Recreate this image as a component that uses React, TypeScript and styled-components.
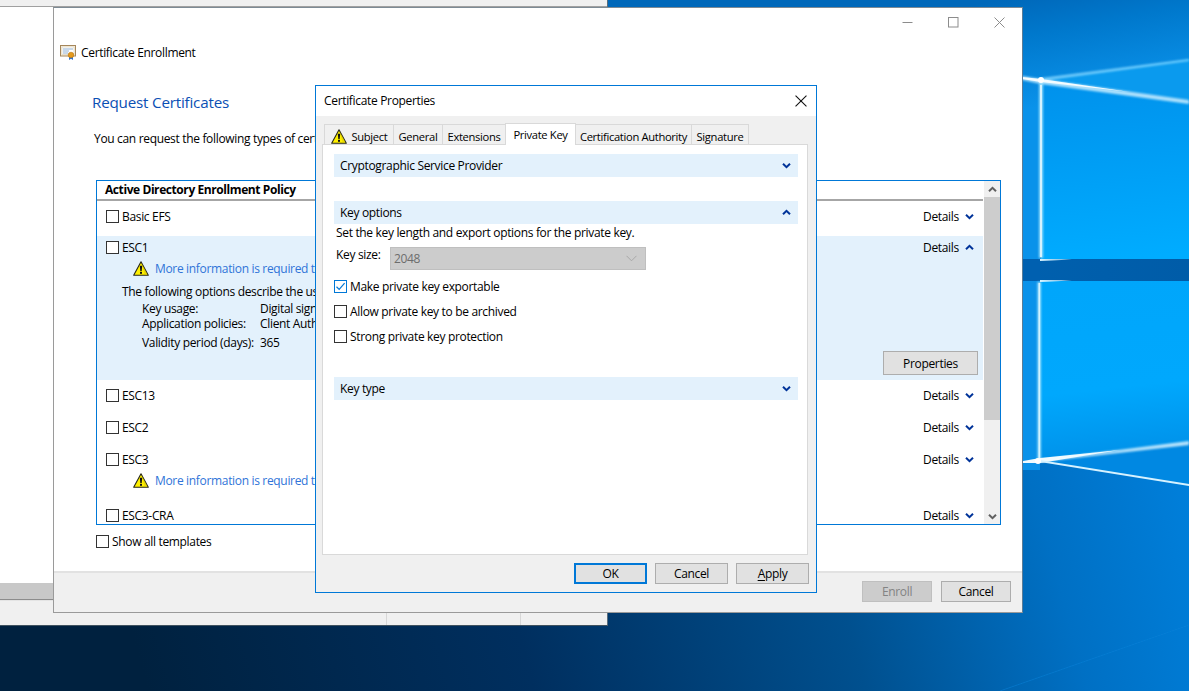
import styled, { createGlobalStyle } from "styled-components";

const GlobalStyle = createGlobalStyle`
  html, body {
    margin: 0;
    padding: 0;
    height: 100%;
    overflow: hidden;
  }
  body {
    font-family: "Open Sans", "Liberation Sans", sans-serif;
    font-size: 12px;
    letter-spacing: -0.33px;
    color: #000;
  }
`;

const Desktop = styled.div`
  position: relative;
  width: 1189px;
  height: 691px;
  overflow: hidden;
  background: #003a70;
`;

const Wallpaper = styled.svg`
  position: absolute;
  inset: 0;
`;

// windows on the desktop
const BackWindow = styled.div`
  position: absolute;
  left: 0;
  top: 0;
  width: 608px;
  height: 626px;
  box-sizing: border-box;
  display: flex;
  flex-direction: column;
  background: #fff;
  border-bottom: 1px solid #40525f;
  border-right: 1px solid #5a6d7c;
`;

const BackTop = styled.div`
  height: 6px;
  background: #f0f0f0;
  border-bottom: 1px solid #a0a0a0;
`;

const BackContent = styled.div`
  flex: 1;
`;

const BackScroll = styled.div`
  height: 16px;
  background: #c8c8c8;
  border-bottom: 1px solid #8c8c8c;
`;

const BackStatus = styled.div`
  height: 24px;
  display: flex;
  background: #f0f0f0;
  border-top: 1px solid #e4e4e4;
`;

const StatusCell = styled.div<{ $w: number }>`
  width: ${(p) => p.$w}px;
  border-right: 1px solid #d7d7d7;
`;

const WizardWindow = styled.div`
  position: absolute;
  left: 53px;
  top: 7px;
  width: 970px;
  height: 606px;
  box-sizing: border-box;
  display: flex;
  flex-direction: column;
  background: #fff;
  border: 1px solid #9a9a9a;
  border-top-color: #7d8a94;
  border-right-color: #5c7c96;
`;

const Controls = styled.div`
  height: 29px;
  display: flex;
  align-items: center;
  justify-content: flex-end;
  gap: 35px;
  padding-right: 17px;
`;

const TitleRow = styled.div`
  display: flex;
  align-items: center;
  gap: 5px;
  height: 20px;
  margin: 5px 0 0 6px;
`;

const Heading = styled.div`
  margin: 29px 0 0 38px;
  height: 22px;
  line-height: 22px;
  font-size: 15.2px;
  letter-spacing: -0.2px;
  color: #0a4fb4;
`;

const Intro = styled.div`
  margin: 17px 0 0 40px;
  height: 18px;
  line-height: 18px;
  white-space: nowrap;
`;

const ListBox = styled.div`
  margin: 32px 0 0 42px;
  width: 905px;
  height: 345px;
  box-sizing: border-box;
  border: 1px solid #0078d7;
  display: flex;
  overflow: hidden;
`;

const ListBody = styled.div`
  flex: 1;
  min-width: 0;
  overflow: hidden;
`;

const ListHeader = styled.div`
  height: 18px;
  line-height: 18px;
  padding-left: 8px;
  font-weight: 700;
  letter-spacing: -0.42px;
  border-bottom: 2px solid #a6a6a6;
`;

const Row = styled.div<{ $open?: boolean; $h: number; $top: number }>`
  height: ${(p) => p.$h}px;
  box-sizing: border-box;
  padding: ${(p) => p.$top}px 0 0 9px;
  background: ${(p) => (p.$open ? "#e3f1fc" : "transparent")};
`;

const RowHead = styled.div`
  display: flex;
  align-items: center;
  height: 16px;
`;

const RowName = styled.span`
  margin-left: 3px;
  flex: 1;
`;

const DetailsToggle = styled.span`
  display: flex;
  align-items: center;
  gap: 6px;
  width: 60px;
`;

const WarnLine = styled.div`
  display: flex;
  align-items: center;
  gap: 6px;
  height: 16px;
  margin: 5px 0 0 27px;
  white-space: nowrap;
  color: #2f74d8;
`;

const OptionsBlock = styled.div`
  margin: 7px 0 0 16px;
  white-space: nowrap;
`;

const OptionLine = styled.div<{ $gap?: number }>`
  display: flex;
  height: 16px;
  line-height: 16px;
  margin: ${(p) => p.$gap ?? 0}px 0 0 20px;
`;

const OptionLabel = styled.span`
  width: 118px;
`;

const RowFoot = styled.div`
  display: flex;
  justify-content: flex-end;
  margin: 0 5px 0 0;
`;

const Scrollbar = styled.div`
  width: 16px;
  margin-left: 1px;
  display: flex;
  flex-direction: column;
  background: #f0f0f0;
`;

const ScrollArrow = styled.div`
  height: 16px;
  display: flex;
  align-items: center;
  justify-content: center;
`;

const ScrollThumb = styled.div`
  height: 223px;
  background: #cdcdcd;
`;

const ScrollTrack = styled.div`
  flex: 1;
`;

const ShowAll = styled.label`
  display: flex;
  align-items: center;
  gap: 3px;
  height: 16px;
  margin: 8px 0 0 42px;
`;

const Footer = styled.div`
  margin-top: auto;
  height: 41px;
  box-sizing: border-box;
  display: flex;
  justify-content: flex-end;
  gap: 9px;
  padding: 8px 11px 0 0;
  background: #f0f0f0;
  border-top: 2px solid #e2e2e2;
`;

const Button = styled.button<{ $w: number; $h?: number; $default?: boolean }>`
  width: ${(p) => p.$w}px;
  height: ${(p) => p.$h ?? 21}px;
  padding: 0;
  box-sizing: border-box;
  font: inherit;
  letter-spacing: inherit;
  color: #000;
  background: #e1e1e1;
  border: ${(p) => (p.$default ? "2px solid #0078d7" : "1px solid #adadad")};
  &:disabled {
    background: #cccccc;
    border-color: #bfbfbf;
    color: #838383;
  }
`;

const DialogWindow = styled.div`
  position: absolute;
  left: 315px;
  top: 85px;
  width: 502px;
  height: 508px;
  box-sizing: border-box;
  display: flex;
  flex-direction: column;
  background: #f0f0f0;
  border: 1px solid #0078d7;
`;

const DialogTitle = styled.div`
  height: 30px;
  box-sizing: border-box;
  display: flex;
  align-items: center;
  justify-content: space-between;
  padding: 0 9px 1px 8px;
  background: #fff;
`;

const TabStrip = styled.div`
  display: flex;
  align-items: flex-end;
  height: 28px;
  padding-left: 9px;
`;

const Tab = styled.div<{ $w: number; $active?: boolean }>`
  width: ${(p) => p.$w}px;
  height: ${(p) => (p.$active ? 22 : 20)}px;
  box-sizing: border-box;
  display: flex;
  align-items: center;
  justify-content: center;
  gap: 5px;
  position: relative;
  white-space: nowrap;
  font-size: 11.2px;
  background: ${(p) => (p.$active ? "#fff" : "#f0f0f0")};
  border: 1px solid #d9d9d9;
  border-bottom: none;
  margin-left: -1px;
  ${(p) => (p.$active ? "z-index: 1; margin-bottom: -1px;" : "padding-top: 3px;")}
`;

const TabPanel = styled.div`
  margin-left: 6px;
  width: 486px;
  height: 411px;
  box-sizing: border-box;
  background: #fff;
  border: 1px solid #d9d9d9;
  padding: 9px 9px 0 11px;
`;

const SectionBar = styled.div<{ $gap?: number }>`
  height: 23px;
  margin-top: ${(p) => p.$gap ?? 0}px;
  display: flex;
  align-items: center;
  justify-content: space-between;
  padding: 0 7px 0 6px;
  background: #e3f1fc;
`;

const HelpLine = styled.div`
  height: 16px;
  line-height: 16px;
  margin: 1px 0 0 2px;
`;

const KeySizeRow = styled.div`
  display: flex;
  margin: 6px 0 0 2px;
`;

const KeySizeLabel = styled.span`
  width: 54px;
  line-height: 16px;
`;

const KeySizeSelect = styled.div`
  width: 256px;
  height: 23px;
  box-sizing: border-box;
  display: flex;
  align-items: center;
  justify-content: space-between;
  padding: 0 8px 0 3px;
  background: #cccccc;
  border: 1px solid #bfbfbf;
  color: #6d6d6d;
`;

const CheckList = styled.div`
  margin-top: 8px;
  display: flex;
  flex-direction: column;
  gap: 9px;
`;

const CheckRow = styled.label`
  display: flex;
  align-items: center;
  gap: 3px;
  height: 16px;
`;

const Box = styled.span<{ $checked?: boolean }>`
  width: 13px;
  height: 13px;
  flex: none;
  box-sizing: border-box;
  display: inline-flex;
  align-items: center;
  justify-content: center;
  background: #fff;
  border: 1px solid ${(p) => (p.$checked ? "#0078d7" : "#333")};
`;

const DialogButtons = styled.div`
  display: flex;
  justify-content: flex-end;
  gap: 8px;
  padding: 8px 7px 0 0;
`;

const Underlined = styled.span`
  text-decoration: underline;
  text-underline-offset: 2px;
`;

const Chevron = ({ up, color = "#003399" }: { up?: boolean; color?: string }) => (
  <svg width="9" height="7" viewBox="0 0 9 7">
    <path
      d={up ? "M1 5.2 L4.5 1.8 L8 5.2" : "M1 1.8 L4.5 5.2 L8 1.8"}
      fill="none"
      stroke={color}
      strokeWidth="2"
    />
  </svg>
);

const WarningIcon = () => (
  <svg width="16" height="15" viewBox="0 0 16 15">
    <path d="M8 0.8 L15.3 14.2 L0.7 14.2 Z" fill="#fff000" stroke="#26261a" strokeWidth="1.1" strokeLinejoin="round" />
    <path d="M8.8 2.5 L14.6 13.6 L11.5 13.6 Z" fill="#d8c800" opacity="0.55" />
    <path d="M6.8 4.8 H9.2 L8.7 10 H7.3 Z" fill="#111" />
    <rect x="7" y="10.8" width="2" height="2" fill="#111" />
  </svg>
);

const CertIcon = () => (
  <svg width="16" height="15" viewBox="0 0 16 15">
    <rect x="0.5" y="0.5" width="15" height="10.5" fill="#f6efe0" stroke="#a5865a" />
    <rect x="2" y="2" width="12" height="7.5" fill="#fff" stroke="#d8cdb6" strokeWidth="0.6" />
    <path d="M3 4 H13 M3 6 H9 M3 8 H8" stroke="#8fb0d4" strokeWidth="1" />
    <path d="M9 11 L9 15 L11 13.8 L13 15 L13 11 Z" fill="#2a6fd0" />
    <circle cx="11" cy="10" r="2.8" fill="#e59a1c" stroke="#b8760f" strokeWidth="0.6" />
  </svg>
);

const CheckMark = () => (
  <svg width="11" height="11" viewBox="0 0 11 11">
    <path d="M1.5 5.8 L4.2 8.4 L9.6 2.2" fill="none" stroke="#0078d7" strokeWidth="1.2" />
  </svg>
);

const MinIcon = () => (
  <svg width="11" height="11" viewBox="0 0 11 11">
    <path d="M0.5 5.5 H10.5" stroke="#8c8c8c" strokeWidth="1" />
  </svg>
);

const MaxIcon = () => (
  <svg width="11" height="11" viewBox="0 0 11 11">
    <rect x="0.5" y="0.5" width="9.5" height="9.5" fill="none" stroke="#8c8c8c" strokeWidth="1" />
  </svg>
);

const CloseIcon = ({ color = "#8c8c8c", size = 11 }: { color?: string; size?: number }) => (
  <svg width={size} height={size} viewBox="0 0 11 11">
    <path d="M0.5 0.5 L10.5 10.5 M10.5 0.5 L0.5 10.5" stroke={color} strokeWidth="1" />
  </svg>
);

const WallpaperArt = () => (
  <Wallpaper width="1189" height="691" viewBox="0 0 1189 691">
    <defs>
      <linearGradient id="floor" gradientUnits="userSpaceOnUse" x1="150" y1="700" x2="1180" y2="420">
        <stop offset="0" stopColor="#00213f" />
        <stop offset="0.35" stopColor="#002f5f" />
        <stop offset="0.65" stopColor="#00508f" />
        <stop offset="0.85" stopColor="#0070c4" />
        <stop offset="1" stopColor="#0080dc" />
      </linearGradient>
      <linearGradient id="sky" gradientUnits="userSpaceOnUse" x1="1000" y1="0" x2="1020" y2="110">
        <stop offset="0" stopColor="#0068ba" />
        <stop offset="0.35" stopColor="#0078cc" />
        <stop offset="1" stopColor="#0a92ea" />
      </linearGradient>
      <linearGradient id="paneTop" gradientUnits="userSpaceOnUse" x1="1100" y1="80" x2="1120" y2="260">
        <stop offset="0" stopColor="#0092ec" />
        <stop offset="1" stopColor="#00acff" />
      </linearGradient>
      <linearGradient id="paneBottom" gradientUnits="userSpaceOnUse" x1="1100" y1="280" x2="1120" y2="460">
        <stop offset="0" stopColor="#00a6fb" />
        <stop offset="0.6" stopColor="#00a8fd" />
        <stop offset="1" stopColor="#0090e8" />
      </linearGradient>
      <linearGradient id="band" gradientUnits="userSpaceOnUse" x1="1022" y1="0" x2="1189" y2="0">
        <stop offset="0" stopColor="#0060ae" />
        <stop offset="1" stopColor="#005ca8" />
      </linearGradient>
      <filter id="glow" x="-20%" y="-20%" width="140%" height="140%">
        <feGaussianBlur stdDeviation="1.2" />
      </filter>
      <filter id="soft" x="-20%" y="-20%" width="140%" height="140%">
        <feGaussianBlur stdDeviation="0.5" />
      </filter>
    </defs>
    <rect width="1189" height="691" fill="url(#floor)" />
    <polygon points="600,0 1189,0 1189,120 1040,90 1040,470 600,470" fill="url(#sky)" />
    <polygon points="1041,80 1189,59 1189,100" fill="#0a9aee" />
    <polygon points="1041,82 1189,103 1189,259 1041,259" fill="url(#paneTop)" />
    <rect x="1022" y="259" width="167" height="22" fill="url(#band)" />
    <polygon points="1040,281 1189,281 1189,443 1040,461" fill="url(#paneBottom)" />
    <polygon points="1040,461 1189,443 1189,486" fill="#0088e2" />
    <rect x="1022" y="259" width="18" height="21" fill="#0060b0" />
    {/* light streaks */}
    <g filter="url(#glow)" opacity="0.9">
      <polygon points="1022,76 1041,79 1189,100 1189,104 1041,84 1022,80" fill="#bfeaff" />
      <polygon points="1041,78 1189,59 1189,61 1041,81" fill="#7fd4ff" />
      <rect x="1039" y="82" width="4" height="176" fill="#a8e6ff" />
      <rect x="1037.5" y="282" width="3.5" height="178" fill="#a8e6ff" />
      <polygon points="1040,460 1189,441 1189,445 1040,462" fill="#cdeeff" />
    </g>
    <g filter="url(#soft)">
      <rect x="1040" y="85" width="2" height="172" fill="#d4f2ff" />
      <rect x="1038.5" y="283" width="1.6" height="175" fill="#d4f2ff" />
      <polygon points="1022,77 1041,79 1130,92 1041,82 1022,79" fill="#f4fcff" />
      <polygon points="1040,259 1072,259.5 1040,261" fill="#d8f4ff" />
      <polygon points="1040,280 1072,280.5 1040,282" fill="#d8f4ff" />
      <polygon points="1023,461 1040,458 1120,450 1040,463 1023,463" fill="#f0fbff" />
      <polygon points="1040,460 1189,484 1189,486 1040,462" fill="#d6f2ff" />
      <circle cx="1041" cy="80" r="3" fill="#fff" />
      <circle cx="1038" cy="461" r="3" fill="#fff" />
    </g>
    <path d="M1000,691 L1189,625" stroke="#0a82d8" strokeWidth="1" opacity="0.5" filter="url(#soft)" />
  </Wallpaper>
);

type CertRow = { name: string; warn?: boolean; top: number; h: number };

const MORE_INFO = "More information is required to enroll for this certificate. Click here to configure settings.";

const plainRows: CertRow[] = [
  { name: "ESC13", top: 7, h: 32 },
  { name: "ESC2", top: 7, h: 32 },
  { name: "ESC3", warn: true, top: 7, h: 56 },
  { name: "ESC3-CRA", top: 7, h: 32 },
];

const RowHeader = ({ name, up }: { name: string; up?: boolean }) => (
  <RowHead>
    <Box />
    <RowName>{name}</RowName>
    <DetailsToggle>
      Details <Chevron up={up} />
    </DetailsToggle>
  </RowHead>
);

export default function App() {
  return (
    <Desktop>
      <GlobalStyle />
      <WallpaperArt />

      <BackWindow>
        <BackTop />
        <BackContent />
        <BackScroll />
        <BackStatus>
          <StatusCell $w={386} />
          <StatusCell $w={133} />
        </BackStatus>
      </BackWindow>

      <WizardWindow>
        <Controls>
          <MinIcon />
          <MaxIcon />
          <CloseIcon />
        </Controls>
        <TitleRow>
          <CertIcon />
          Certificate Enrollment
        </TitleRow>
        <Heading>Request Certificates</Heading>
        <Intro>
          You can request the following types of certificates. Select the certificates you want to request, and then click Enroll.
        </Intro>
        <ListBox>
          <ListBody>
            <ListHeader>Active Directory Enrollment Policy</ListHeader>
            <Row $h={35} $top={7}>
              <RowHeader name="Basic EFS" />
            </Row>
            <Row $open $h={144} $top={3}>
              <RowHeader name="ESC1" up />
              <WarnLine>
                <WarningIcon />
                {MORE_INFO}
              </WarnLine>
              <OptionsBlock>
                The following options describe the uses and validity period that apply to this type of certificate:
                <OptionLine $gap={1}>
                  <OptionLabel>Key usage:</OptionLabel>
                  Digital signature, Key encipherment
                </OptionLine>
                <OptionLine $gap={-1}>
                  <OptionLabel>Application policies:</OptionLabel>
                  Client Authentication
                </OptionLine>
                <OptionLine $gap={3}>
                  <OptionLabel>Validity period (days):</OptionLabel>
                  365
                </OptionLine>
              </OptionsBlock>
              <RowFoot>
                <Button $w={95} $h={24}>Properties</Button>
              </RowFoot>
            </Row>
            {plainRows.map((r) => (
              <Row key={r.name} $h={r.h} $top={r.top}>
                <RowHeader name={r.name} />
                {r.warn && (
                  <WarnLine>
                    <WarningIcon />
                    {MORE_INFO}
                  </WarnLine>
                )}
              </Row>
            ))}
          </ListBody>
          <Scrollbar>
            <ScrollArrow>
              <Chevron up color="#606060" />
            </ScrollArrow>
            <ScrollThumb />
            <ScrollTrack />
            <ScrollArrow>
              <Chevron color="#606060" />
            </ScrollArrow>
          </Scrollbar>
        </ListBox>
        <ShowAll>
          <Box />
          Show all templates
        </ShowAll>
        <Footer>
          <Button $w={70} disabled>Enroll</Button>
          <Button $w={70}>Cancel</Button>
        </Footer>
      </WizardWindow>

      <DialogWindow>
        <DialogTitle>
          Certificate Properties
          <CloseIcon color="#111" size={12} />
        </DialogTitle>
        <TabStrip>
          <Tab $w={70}>
            <WarningIcon />
            Subject
          </Tab>
          <Tab $w={50}>General</Tab>
          <Tab $w={64}>Extensions</Tab>
          <Tab $w={71} $active>Private Key</Tab>
          <Tab $w={117}>Certification Authority</Tab>
          <Tab $w={58}>Signature</Tab>
        </TabStrip>
        <TabPanel>
          <SectionBar>
            Cryptographic Service Provider
            <Chevron />
          </SectionBar>
          <SectionBar $gap={24}>
            Key options
            <Chevron up />
          </SectionBar>
          <HelpLine>Set the key length and export options for the private key.</HelpLine>
          <KeySizeRow>
            <KeySizeLabel>Key size:</KeySizeLabel>
            <KeySizeSelect>
              2048
              <svg width="11" height="7" viewBox="0 0 11 7">
                <path d="M0.5 0.8 L5.5 5.8 L10.5 0.8" fill="none" stroke="#a8a8a8" strokeWidth="1" />
              </svg>
            </KeySizeSelect>
          </KeySizeRow>
          <CheckList>
            <CheckRow>
              <Box $checked>
                <CheckMark />
              </Box>
              Make private key exportable
            </CheckRow>
            <CheckRow>
              <Box />
              Allow private key to be archived
            </CheckRow>
            <CheckRow>
              <Box />
              Strong private key protection
            </CheckRow>
          </CheckList>
          <SectionBar $gap={33}>
            Key type
            <Chevron />
          </SectionBar>
        </TabPanel>
        <DialogButtons>
          <Button $w={73} $default>OK</Button>
          <Button $w={73}>Cancel</Button>
          <Button $w={73}>
            <Underlined>A</Underlined>pply
          </Button>
        </DialogButtons>
      </DialogWindow>
    </Desktop>
  );
}
